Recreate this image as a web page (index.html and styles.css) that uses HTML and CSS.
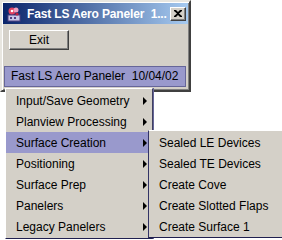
FILE: index.html
```html
<!DOCTYPE html>
<html>
<head>
  <title>Fast LS Aero Paneler</title>
  <link rel="stylesheet" href="styles.css">
</head>
<body>

<div class="frame">
  <div class="titlebar">
    <svg class="appicon" width="16" height="16" viewBox="0 0 16 16">
      <rect x="2" y="9" width="12" height="6" fill="#c8c8e8" stroke="#504080"/>
      <rect x="4" y="11" width="2" height="2" fill="#504080"/>
      <rect x="8" y="11" width="2" height="2" fill="#504080"/>
      <circle cx="6" cy="5" r="3.5" fill="#e04060"/>
      <circle cx="10" cy="4" r="2.5" fill="#f0a0c0"/>
      <circle cx="6" cy="5" r="1.3" fill="#fff"/>
      <circle cx="11" cy="8" r="1.6" fill="#c02040"/>
    </svg>
    <span class="title">Fast LS Aero Paneler&nbsp; 1...</span>
    <button class="close">
      <svg width="8" height="7" viewBox="0 0 8 7"><path d="M0 0h2l2 2 2-2h2v1L5 3.5 8 6v1H6L4 5 2 7H0V6l3-2.5L0 1z" fill="#000"/></svg>
    </button>
  </div>
  <div class="content">
    <button class="exit">Exit</button>
  </div>
</div>

<div class="menubar">Fast LS Aero Paneler&nbsp; 10/04/02</div>

<div class="popup main">
  <div class="item">Input/Save Geometry<span class="arrow"></span></div>
  <div class="item">Planview Processing<span class="arrow"></span></div>
  <div class="item active">Surface Creation<span class="arrow"></span></div>
  <div class="item">Positioning<span class="arrow"></span></div>
  <div class="item">Surface Prep<span class="arrow"></span></div>
  <div class="item">Panelers<span class="arrow"></span></div>
  <div class="item">Legacy Panelers<span class="arrow"></span></div>
</div>

<div class="popup sub">
  <div class="item">Sealed LE Devices</div>
  <div class="item">Sealed TE Devices</div>
  <div class="item">Create Cove</div>
  <div class="item">Create Slotted Flaps</div>
  <div class="item">Create Surface 1</div>
</div>

</body>
</html>
```

FILE: styles.css
```css
body { margin: 0; background: #fff; font-family: "Liberation Sans", Arial, sans-serif; font-size: 12px; color: #000; }

.frame { position: absolute; left: 0; top: 0; width: 185px; height: 86px; background: #d4d0c8; border: 2px solid; border-color: #e8e6e0 #404040 #404040 #e8e6e0; box-shadow: inset 1px 1px 0 #fff, inset -1px -1px 0 #808080; padding: 1px; box-sizing: content-box; }
.titlebar { display: flex; align-items: center; height: 21px; padding: 0 2px 0 3px; background: linear-gradient(to right, #0a246a, #a6caf0); }
.appicon { flex: none; }
.title { flex: 1; margin-left: 5px; color: #fff; font-weight: bold; font-size: 12px; letter-spacing: -0.15px; white-space: nowrap; }
.close { flex: none; display: flex; align-items: center; justify-content: center; width: 16px; height: 14px; padding: 0; background: #d4d0c8; border: 1px solid; border-color: #fff #404040 #404040 #fff; box-shadow: inset -1px -1px 0 #808080; }
.content { padding: 6px 0 0 6px; }
.exit { width: 60px; height: 20px; padding: 0; font-family: inherit; font-size: 12px; background: #d4d0c8; border: 1px solid; border-color: #fff #404040 #404040 #fff; box-shadow: inset -1px -1px 0 #808080; }

.menubar { position: absolute; left: 4px; top: 66px; width: 174px; height: 19px; line-height: 19px; padding-left: 6px; background: #9999cc; border: 1px solid #666699; white-space: nowrap; }

.popup { position: absolute; background: #d4d0c8; border: 1px solid; border-color: #fff #404060 #202050 #fff; box-shadow: 1px 0 0 #666699; }
.main { left: 5px; top: 88px; width: 146px; padding: 1px 0 1px 0; }
.sub { left: 148px; top: 130px; width: 133px; padding: 1px 0 0 0; border-left-color: #333366; }

.item { display: flex; align-items: center; height: 21px; padding-left: 10px; white-space: nowrap; }
.item.active { background: #9999cc; }
.arrow { margin-left: auto; margin-right: 5px; width: 0; height: 0; border-left: 4px solid #000; border-top: 4px solid transparent; border-bottom: 4px solid transparent; }
```
